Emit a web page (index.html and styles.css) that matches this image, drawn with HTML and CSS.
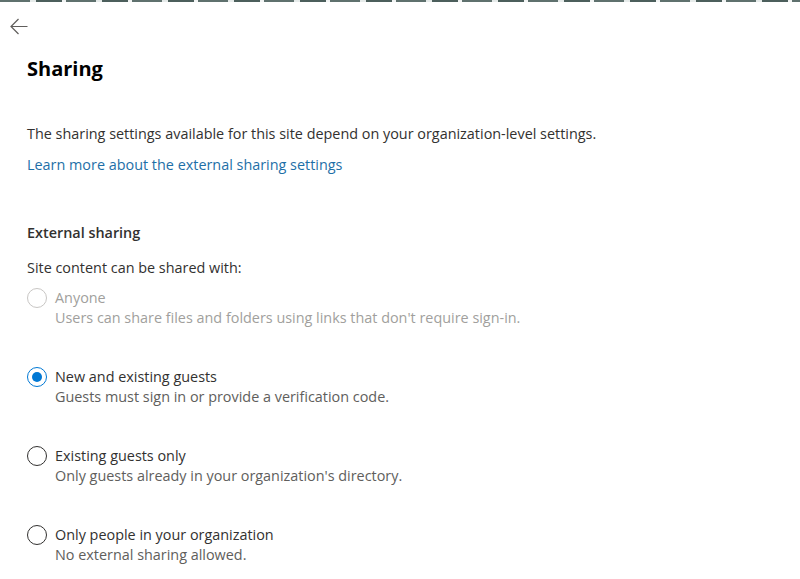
FILE: index.html
```html
<!DOCTYPE html>
<html lang="en">
<head>
<meta charset="UTF-8" />
<meta name="viewport" content="width=device-width, initial-scale=1" />
<title>Sharing</title>
<link rel="stylesheet" href="styles.css">
</head>
<body>
<div class="top-edge"></div>
<div class="panel">
  <button class="back" aria-label="Back">
    <svg width="18" height="17" viewBox="0 0 18 17"><path d="M8.5 1 L1 8.5 L8.5 16 M1 8.5 H17.5" fill="none" stroke="#605e5c" stroke-width="1.2"/></svg>
  </button>
  <h1>Sharing</h1>
  <p class="intro">The sharing settings available for this site depend on your organization-level settings.</p>
  <a href="#" class="learn">Learn more about the external sharing settings</a>

  <h2>External sharing</h2>
  <p class="lead">Site content can be shared with:</p>

  <div class="options">
    <label class="option disabled">
      <input type="radio" name="share" disabled />
      <span class="circle"></span>
      <span class="text">
        <span class="title">Anyone</span>
        <span class="desc">Users can share files and folders using links that don't require sign-in.</span>
      </span>
    </label>
    <label class="option">
      <input type="radio" name="share" checked />
      <span class="circle"></span>
      <span class="text">
        <span class="title">New and existing guests</span>
        <span class="desc">Guests must sign in or provide a verification code.</span>
      </span>
    </label>
    <label class="option">
      <input type="radio" name="share" />
      <span class="circle"></span>
      <span class="text">
        <span class="title">Existing guests only</span>
        <span class="desc">Only guests already in your organization's directory.</span>
      </span>
    </label>
    <label class="option">
      <input type="radio" name="share" />
      <span class="circle"></span>
      <span class="text">
        <span class="title">Only people in your organization</span>
        <span class="desc">No external sharing allowed.</span>
      </span>
    </label>
  </div>
</div>
</body>
</html>
```
FILE: styles.css
```css
/* Reset & Basic */
* {
  box-sizing: border-box;
}
body {
  margin: 0;
  background: white;
  font-family: 'Open Sans', 'Noto Sans', sans-serif;
  color: #323130;
  overflow: hidden;
}
.top-edge {
  height: 2px;
  background: repeating-linear-gradient(90deg, #5f716e 0 30px, #e6ebea 30px 36px, #4c5f5c 36px 62px, #f2f4f4 62px 66px);
}
.panel {
  padding: 12px 0 0 27px;
}
.back {
  display: block;
  margin-left: -21px;
  padding: 4px;
  border: none;
  background: none;
  cursor: pointer;
  height: 26px;
}
h1 {
  margin: 15px 0 0;
  font-size: 20px;
  font-weight: 700;
  color: #000;
  line-height: 28px;
}
.intro {
  margin: 41px 0 0;
  font-size: 14.4px;
  line-height: 20px;
  color: #323130;
}
.learn {
  display: inline-block;
  margin-top: 11px;
  font-size: 14.4px;
  line-height: 20px;
  color: #1e6fa7;
  text-decoration: none;
}
.learn:hover {
  text-decoration: underline;
}
h2 {
  margin: 48px 0 0;
  font-size: 14.4px;
  font-weight: 600;
  line-height: 20px;
  color: #323130;
}
.lead {
  margin: 15px 0 0;
  font-size: 14.4px;
  line-height: 20px;
}
.options {
  display: flex;
  flex-direction: column;
  gap: 39px;
  margin-top: 10px;
}
.option {
  display: flex;
  align-items: flex-start;
  gap: 8px;
  cursor: pointer;
}
.option input {
  display: none;
}
.circle {
  width: 20px;
  height: 20px;
  border: 1px solid #323130;
  border-radius: 50%;
  flex-shrink: 0;
  position: relative;
}
.option input:checked + .circle {
  border-color: #0078d4;
}
.option input:checked + .circle::after {
  content: '';
  position: absolute;
  left: 4px;
  top: 4px;
  width: 10px;
  height: 10px;
  border-radius: 50%;
  background: #0078d4;
}
.text {
  display: flex;
  flex-direction: column;
}
.title {
  font-size: 14.4px;
  line-height: 20px;
}
.desc {
  font-size: 14.4px;
  line-height: 20px;
  color: #605e5c;
}
.option.disabled {
  cursor: default;
}
.option.disabled .circle {
  border-color: #c8c6c4;
}
.option.disabled .title,
.option.disabled .desc {
  color: #a19f9d;
}
```
